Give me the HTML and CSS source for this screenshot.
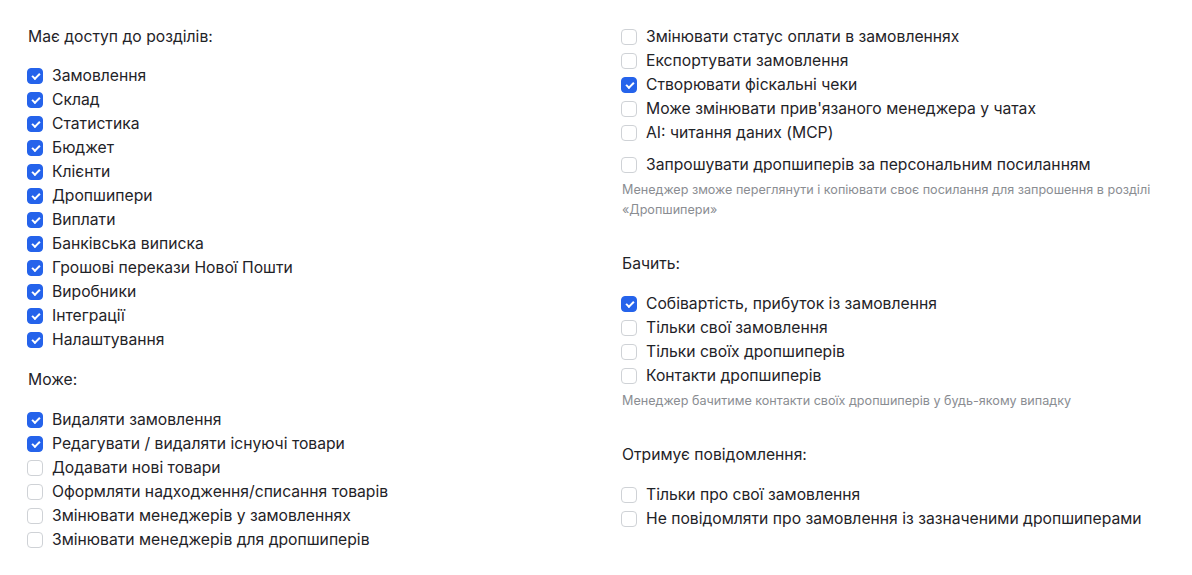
FILE: index.html
```html
<!DOCTYPE html>
<html lang="uk">
<head>
<meta charset="utf-8">
<link rel="stylesheet" href="styles.css">
</head>
<body>
<div class="page">
  <div class="col">
    <section class="group">
      <div class="title">Має доступ до розділів:</div>
      <ul class="list">
        <li class="item"><span class="cb on"></span>Замовлення</li>
        <li class="item"><span class="cb on"></span>Склад</li>
        <li class="item"><span class="cb on"></span>Статистика</li>
        <li class="item"><span class="cb on"></span>Бюджет</li>
        <li class="item"><span class="cb on"></span>Клієнти</li>
        <li class="item"><span class="cb on"></span>Дропшипери</li>
        <li class="item"><span class="cb on"></span>Виплати</li>
        <li class="item"><span class="cb on"></span>Банківська виписка</li>
        <li class="item"><span class="cb on"></span>Грошові перекази Нової Пошти</li>
        <li class="item"><span class="cb on"></span>Виробники</li>
        <li class="item"><span class="cb on"></span>Інтеграції</li>
        <li class="item"><span class="cb on"></span>Налаштування</li>
      </ul>
    </section>
    <section class="group short">
      <div class="title">Може:</div>
      <ul class="list">
        <li class="item"><span class="cb on"></span>Видаляти замовлення</li>
        <li class="item"><span class="cb on"></span>Редагувати / видаляти існуючі товари</li>
        <li class="item"><span class="cb"></span>Додавати нові товари</li>
        <li class="item"><span class="cb"></span>Оформляти надходження/списання товарів</li>
        <li class="item"><span class="cb"></span>Змінювати менеджерів у замовленнях</li>
        <li class="item"><span class="cb"></span>Змінювати менеджерів для дропшиперів</li>
      </ul>
    </section>
  </div>
  <div class="col">
    <section class="group">
      <ul class="list">
        <li class="item"><span class="cb"></span>Змінювати статус оплати в замовленнях</li>
        <li class="item"><span class="cb"></span>Експортувати замовлення</li>
        <li class="item"><span class="cb on"></span>Створювати фіскальні чеки</li>
        <li class="item"><span class="cb"></span>Може змінювати прив'язаного менеджера у чатах</li>
        <li class="item"><span class="cb"></span>AI: читання даних (MCP)</li>
        <li class="item spaced"><span class="cb"></span>Запрошувати дропшиперів за персональним посиланням</li>
      </ul>
      <p class="hint">Менеджер зможе переглянути і копіювати своє посилання для запрошення в розділі «Дропшипери»</p>
    </section>
    <section class="group">
      <div class="title">Бачить:</div>
      <ul class="list">
        <li class="item"><span class="cb on"></span>Собівартість, прибуток із замовлення</li>
        <li class="item"><span class="cb"></span>Тільки свої замовлення</li>
        <li class="item"><span class="cb"></span>Тільки своїх дропшиперів</li>
        <li class="item"><span class="cb"></span>Контакти дропшиперів</li>
      </ul>
      <p class="hint">Менеджер бачитиме контакти своїх дропшиперів у будь-якому випадку</p>
    </section>
    <section class="group">
      <div class="title">Отримує повідомлення:</div>
      <ul class="list">
        <li class="item"><span class="cb"></span>Тільки про свої замовлення</li>
        <li class="item"><span class="cb"></span>Не повідомляти про замовлення із зазначеними дропшиперами</li>
      </ul>
    </section>
  </div>
</div>
</body>
</html>
```

FILE: styles.css
```css
* { box-sizing: border-box; }
html, body { margin: 0; padding: 0; background: #ffffff; }
body {
  font-family: Inter, "Noto Sans", sans-serif;
  font-size: 15.7px;
  line-height: 24px;
  color: #1f2328;
}
.page {
  display: grid;
  grid-template-columns: 542px 542px;
  column-gap: 52px;
  padding: 25px 28px 24px;
}
.col {
  display: flex;
  flex-direction: column;
  gap: 32px;
}
.col .group.short { margin-top: -16px; }
.title {
  margin-bottom: 15px;
}
.group + .group .title { margin-bottom: 16px; }
.list {
  list-style: none;
  margin: 0;
  padding: 0;
}
.item {
  display: flex;
  align-items: center;
  gap: 9px;
  height: 24px;
  white-space: nowrap;
}
.item.spaced { margin-top: 8px; }
.cb {
  flex: none;
  width: 16px;
  height: 16px;
  border: 1px solid #cfd2d6;
  border-radius: 4px;
  background: #fff;
  position: relative;
  margin-left: -1px;
}
.cb.on {
  background: #2563eb;
  border-color: #2563eb;
}
.cb.on::after {
  content: "";
  position: absolute;
  left: 4px;
  top: 4px;
  width: 6px;
  height: 3px;
  border-left: 2px solid #fff;
  border-bottom: 2px solid #fff;
  transform: rotate(-45deg);
}
.hint {
  margin: 3px 0 0;
  font-size: 12.6px;
  line-height: 20px;
  color: #8a8d92;
}
```
